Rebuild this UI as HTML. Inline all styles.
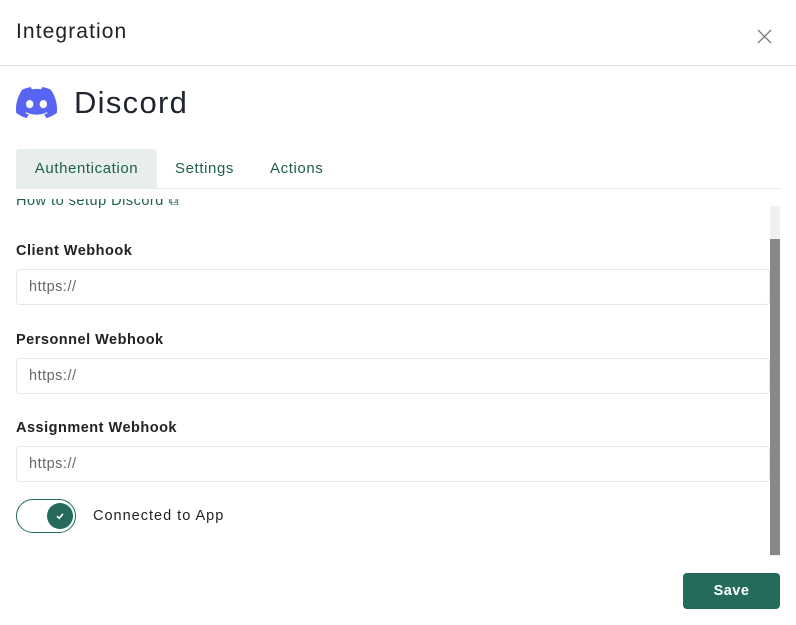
<!DOCTYPE html>
<html><head><meta charset="utf-8"><style>
*{box-sizing:border-box;margin:0;padding:0}
body{width:796px;height:625px;background:#fff;font-family:"Liberation Sans",sans-serif;position:relative;overflow:hidden;color:#1f2430}
.abs{position:absolute}
.hdr{left:0;top:0;width:796px;height:66px;border-bottom:1px solid #e3e3e3}
.title{left:16px;top:20px;font-size:21px;color:#222;letter-spacing:1.1px}
.close{left:757px;top:29px}
.dtitle{left:74px;top:85px;font-size:31px;color:#1f2430;letter-spacing:1.3px}
.tabline{left:16px;top:188px;width:764px;height:1px;background:#e6ecea}
.tab{top:149px;height:39px;line-height:39px;font-size:15px;color:#1e5e4d;letter-spacing:0.6px}
.lbl{left:16px;font-size:14.5px;font-weight:bold;color:#222;letter-spacing:0.5px}
.inp{left:16px;width:754px;height:36px;border:1px solid #e3e8e6;border-radius:4px;padding-left:12px;line-height:34px;font-size:14.5px;color:#666;letter-spacing:0.5px}
.save{left:683px;top:573px;width:97px;height:36px;background:#246b5b;border-radius:4px;color:#fff;font-weight:bold;font-size:14.5px;text-align:center;line-height:36px;letter-spacing:0.5px}
</style></head><body>
<div class="abs hdr"></div>
<div class="abs title">Integration</div>
<svg class="abs close" width="15" height="15" viewBox="0 0 15 15"><path d="M1 1L14 14M14 1L1 14" stroke="#777" stroke-width="1.3"/></svg>
<svg class="abs" style="left:16px;top:87px" width="41" height="31" viewBox="0 0 127 96"><path fill="#5865F2" d="M107.7 8.07A105 105 0 0 0 81.47 0a72 72 0 0 0-3.36 6.830 97.7 97.7 0 0 0-29.11 0A72 72 0 0 0 45.64 0a105.9 105.9 0 0 0-26.25 8.09C2.79 32.65-1.71 56.6.54 80.21a105.7 105.7 0 0 0 32.17 16.15 77.7 77.7 0 0 0 6.890-11.11 68.4 68.4 0 0 1-10.85-5.18c.91-.66 1.8-1.34 2.66-2a75.6 75.6 0 0 0 64.32 0c.87.71 1.76 1.39 2.66 2a68.7 68.7 0 0 1-10.87 5.19 77 77 0 0 0 6.89 11.1 105.3 105.3 0 0 0 32.19-16.14c2.64-27.38-4.51-51.11-18.9-72.15zM42.45 65.69C36.18 65.69 31 60 31 53s5-12.74 11.43-12.74S54 46 53.89 53s-5.05 12.690-11.44 12.69zm42.24 0C78.41 65.69 73.25 60 73.25 53s5-12.74 11.44-12.74S96.23 46 96.12 53s-5.04 12.69-11.43 12.69z"/></svg>
<div class="abs dtitle">Discord</div>
<div class="abs tabline"></div>
<div class="abs tab" style="left:16px;width:141px;background:#e8eeec;border-radius:3px 3px 0 0;text-align:center">Authentication</div>
<div class="abs tab" style="left:175px">Settings</div>
<div class="abs tab" style="left:270px">Actions</div>
<div class="abs" style="left:0;top:199px;width:770px;height:20px;overflow:hidden">
<div style="position:absolute;left:16px;top:-6px;font-size:14.5px;color:#1e5e4d;letter-spacing:0.5px">How to setup Discord ⧉</div></div>
<div class="abs" style="left:770px;top:206px;width:10px;height:350px;background:#f0f0f0"></div>
<div class="abs" style="left:770px;top:239px;width:10px;height:316px;background:#888"></div>
<div class="abs lbl" style="top:243px">Client Webhook</div>
<div class="abs inp" style="top:269px">https://</div>
<div class="abs lbl" style="top:332px">Personnel Webhook</div>
<div class="abs inp" style="top:358px">https://</div>
<div class="abs lbl" style="top:420px">Assignment Webhook</div>
<div class="abs inp" style="top:446px">https://</div>
<div class="abs" style="left:16px;top:499px;width:60px;height:34px;border:1.5px solid #246b5b;border-radius:17px"></div>
<div class="abs" style="left:47px;top:503px;width:26px;height:26px;border-radius:50%;background:#246b5b"></div>
<svg class="abs" style="left:55px;top:511px" width="10" height="10" viewBox="0 0 10 10"><path d="M2 5.2L4.2 7.3L8 2.8" stroke="#fff" stroke-width="1.6" fill="none"/></svg>
<div class="abs" style="left:93px;top:508px;font-size:14.5px;color:#222;letter-spacing:1px">Connected to App</div>
<div class="abs save">Save</div>
</body></html>
